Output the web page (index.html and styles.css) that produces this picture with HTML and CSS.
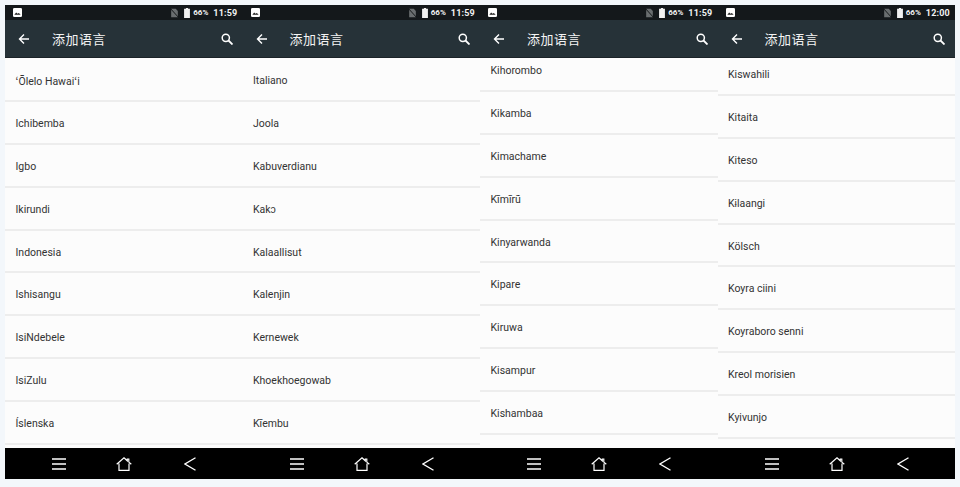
FILE: index.html
```html
<!DOCTYPE html>
<html lang="en">
<head>
    <meta charset="UTF-8">
    <meta name="viewport" content="width=device-width, initial-scale=1.0">
    <title>添加语言</title>
    <link rel="stylesheet" href="styles.css">
</head>
<body>
    <svg class="defs" width="0" height="0">
      <symbol id="i-photo" viewBox="0 0 10 10"><rect width="10" height="10" rx="1.5" fill="#fff"/><path d="M1.5 7.5l2-2.5 1.5 1.5 1.5-1 2 2z" fill="#222"/></symbol>
      <symbol id="i-nosim" viewBox="0 0 10 12"><path d="M1 1h5.500l2.500 2.500v7.500h-8z" fill="#6a6e70"/><path d="M0 .5l10 11" stroke="#16191b" stroke-width="1.2"/></symbol>
      <symbol id="i-batt" viewBox="0 0 7 12"><path d="M2.200 0h2.600v1h2.200v11h-7v-11h2.200z" fill="#f2f2f2"/></symbol>
      <symbol id="i-arrow" viewBox="0 0 12 12"><path d="M11 6h-9.500M6 1.500l-4.500 4.500 4.500 4.500" fill="none" stroke="#fff" stroke-width="1.400"/></symbol>
      <symbol id="i-search" viewBox="0 0 12 12"><circle cx="4.800" cy="4.800" r="3.600" fill="none" stroke="#fff" stroke-width="1.500"/><path d="M7.500 7.500l4 4" stroke="#fff" stroke-width="1.800"/></symbol>
      <symbol id="i-menu" viewBox="0 0 14 12"><path d="M0 1h14M0 6h14M0 11h14" stroke="#fff" stroke-width="1.400"/></symbol>
      <symbol id="i-home" viewBox="0 0 16 14"><path d="M.7 7.300l7.300-6.500 3.300 3v-1.800h1.500v3.100l2.500 2.200M3 6.500v6.800h10v-6.800" fill="none" stroke="#fff" stroke-width="1.200"/></symbol>
      <symbol id="i-back" viewBox="0 0 12 14"><path d="M11.500.7l-10.500 6.300 10.500 6.300" fill="none" stroke="#fff" stroke-width="1.300"/></symbol>
    </svg>

    <div class="shots">
      <section class="phone">
        <div class="status">
          <svg class="ic-photo"><use href="#i-photo"/></svg>
          <span class="status-right">
            <svg class="ic-nosim"><use href="#i-nosim"/></svg>
            <svg class="ic-batt"><use href="#i-batt"/></svg>
            <span class="pct">66%</span>
            <span class="time">11:59</span>
          </span>
        </div>
        <div class="toolbar">
          <svg class="ic-arrow"><use href="#i-arrow"/></svg>
          <span class="title">添加语言</span>
          <svg class="ic-search"><use href="#i-search"/></svg>
        </div>
        <ul class="langs">
          <li>ʻŌlelo Hawaiʻi</li>
          <li>Ichibemba</li>
          <li>Igbo</li>
          <li>Ikirundi</li>
          <li>Indonesia</li>
          <li>Ishisangu</li>
          <li>IsiNdebele</li>
          <li>IsiZulu</li>
          <li>Íslenska</li>
        </ul>
        <div class="navbar">
          <svg class="ic-menu"><use href="#i-menu"/></svg>
          <svg class="ic-home"><use href="#i-home"/></svg>
          <svg class="ic-back"><use href="#i-back"/></svg>
        </div>
      </section>

      <section class="phone">
        <div class="status">
          <svg class="ic-photo"><use href="#i-photo"/></svg>
          <span class="status-right">
            <svg class="ic-nosim"><use href="#i-nosim"/></svg>
            <svg class="ic-batt"><use href="#i-batt"/></svg>
            <span class="pct">66%</span>
            <span class="time">11:59</span>
          </span>
        </div>
        <div class="toolbar">
          <svg class="ic-arrow"><use href="#i-arrow"/></svg>
          <span class="title">添加语言</span>
          <svg class="ic-search"><use href="#i-search"/></svg>
        </div>
        <ul class="langs">
          <li>Italiano</li>
          <li>Joola</li>
          <li>Kabuverdianu</li>
          <li>Kakɔ</li>
          <li>Kalaallisut</li>
          <li>Kalenjin</li>
          <li>Kernewek</li>
          <li>Khoekhoegowab</li>
          <li>Kĩembu</li>
        </ul>
        <div class="navbar">
          <svg class="ic-menu"><use href="#i-menu"/></svg>
          <svg class="ic-home"><use href="#i-home"/></svg>
          <svg class="ic-back"><use href="#i-back"/></svg>
        </div>
      </section>

      <section class="phone">
        <div class="status">
          <svg class="ic-photo"><use href="#i-photo"/></svg>
          <span class="status-right">
            <svg class="ic-nosim"><use href="#i-nosim"/></svg>
            <svg class="ic-batt"><use href="#i-batt"/></svg>
            <span class="pct">66%</span>
            <span class="time">11:59</span>
          </span>
        </div>
        <div class="toolbar">
          <svg class="ic-arrow"><use href="#i-arrow"/></svg>
          <span class="title">添加语言</span>
          <svg class="ic-search"><use href="#i-search"/></svg>
        </div>
        <ul class="langs scrolled-a">
          <li>Kihorombo</li>
          <li>Kikamba</li>
          <li>Kimachame</li>
          <li>Kĩmĩrũ</li>
          <li>Kinyarwanda</li>
          <li>Kipare</li>
          <li>Kiruwa</li>
          <li>Kisampur</li>
          <li>Kishambaa</li>
        </ul>
        <div class="navbar">
          <svg class="ic-menu"><use href="#i-menu"/></svg>
          <svg class="ic-home"><use href="#i-home"/></svg>
          <svg class="ic-back"><use href="#i-back"/></svg>
        </div>
      </section>

      <section class="phone">
        <div class="status">
          <svg class="ic-photo"><use href="#i-photo"/></svg>
          <span class="status-right">
            <svg class="ic-nosim"><use href="#i-nosim"/></svg>
            <svg class="ic-batt"><use href="#i-batt"/></svg>
            <span class="pct">66%</span>
            <span class="time">12:00</span>
          </span>
        </div>
        <div class="toolbar">
          <svg class="ic-arrow"><use href="#i-arrow"/></svg>
          <span class="title">添加语言</span>
          <svg class="ic-search"><use href="#i-search"/></svg>
        </div>
        <ul class="langs scrolled-b">
          <li>Kiswahili</li>
          <li>Kitaita</li>
          <li>Kiteso</li>
          <li>Kɨlaangi</li>
          <li>Kölsch</li>
          <li>Koyra ciini</li>
          <li>Koyraboro senni</li>
          <li>Kreol morisien</li>
          <li>Kyivunjo</li>
        </ul>
        <div class="navbar">
          <svg class="ic-menu"><use href="#i-menu"/></svg>
          <svg class="ic-home"><use href="#i-home"/></svg>
          <svg class="ic-back"><use href="#i-back"/></svg>
        </div>
      </section>
    </div>
</body>
</html>
```

FILE: styles.css
```css
body {
  margin: 0;
  background-color: #f3f7fb;
  font-family: Roboto, "Noto Sans CJK SC", sans-serif;
}

.defs {
  display: block;
  height: 0;
}

.shots {
  display: grid;
  grid-template-columns: repeat(4, 1fr);
  height: 474px;
  padding: 5px 5px 8px;
}

.phone {
  display: flex;
  flex-direction: column;
  min-width: 0;
  background-color: #fcfcfc;
}

.status {
  display: flex;
  align-items: center;
  justify-content: space-between;
  flex: 0 0 15px;
  padding: 0 5px 0 8px;
  background-color: #14181b;
  color: #f2f2f2;
}

.status-right {
  display: flex;
  align-items: center;
}

.ic-photo {
  width: 9px;
  height: 9px;
}

.ic-nosim {
  width: 9px;
  height: 10px;
  margin-right: 5px;
}

.ic-batt {
  width: 6px;
  height: 10px;
  margin-right: 3px;
}

.pct {
  font-size: 8px;
  font-weight: 700;
  margin-right: 5px;
}

.time {
  font-size: 9px;
  font-weight: 700;
  letter-spacing: 0.2px;
}

.toolbar {
  display: flex;
  align-items: center;
  flex: 0 0 38px;
  padding: 0 10px 0 13px;
  box-sizing: border-box;
  background-color: #263238;
  border-bottom: 1px solid #1b2328;
  color: #f4f4f4;
}

.ic-arrow {
  width: 12px;
  height: 12px;
  margin-right: 22px;
}

.title {
  flex: 1;
  font-size: 13px;
  letter-spacing: 0.5px;
}

.ic-search {
  width: 12px;
  height: 12px;
}

.langs {
  flex: 1;
  min-height: 0;
  overflow: hidden;
  list-style: none;
  margin: 0;
  padding: 1px 0 0;
}

.langs li {
  display: flex;
  align-items: center;
  height: 42.900px;
  box-sizing: border-box;
  padding: 2px 0 0 10.500px;
  border-bottom: 2px solid #ededed;
  font-size: 10.500px;
  color: #333;
}

.scrolled-a li:first-child {
  margin-top: -10px;
}

.scrolled-b li:first-child {
  margin-top: -6px;
}

.navbar {
  display: flex;
  align-items: center;
  flex: 0 0 31px;
  padding-left: 47px;
  background-color: #000;
}

.ic-menu {
  width: 14px;
  height: 12px;
  margin-right: 50px;
}

.ic-home {
  width: 16px;
  height: 14px;
  margin-right: 52px;
}

.ic-back {
  width: 12px;
  height: 14px;
}
```
